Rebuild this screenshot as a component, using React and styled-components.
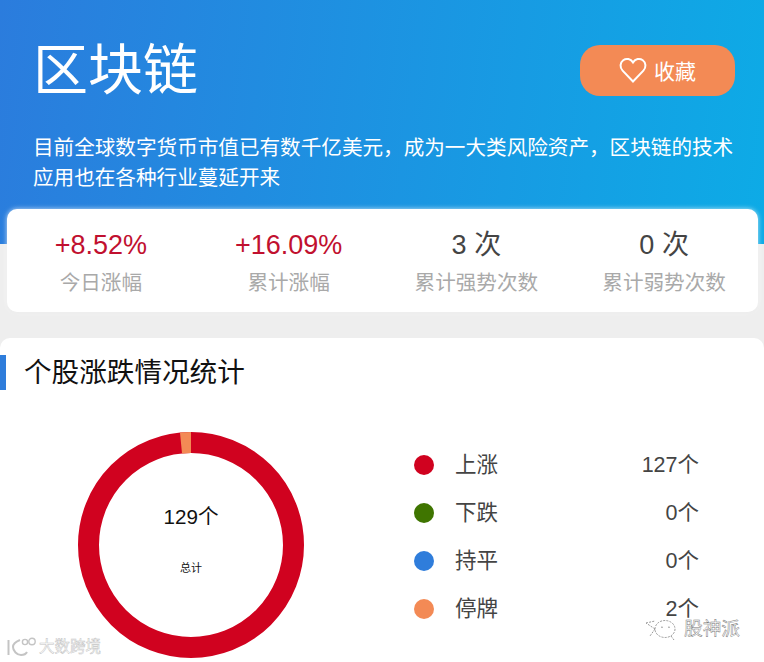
import React from "react";
import styled, { createGlobalStyle } from "styled-components";

const Global = createGlobalStyle`
  html, body { margin: 0; padding: 0; background: #eeeeee; overflow: hidden; }
  body { font-family: "Liberation Sans", "Noto Sans CJK SC", sans-serif; }
  * { box-sizing: border-box; }
`;
const Page = styled.div`
  width: 764px; height: 662px; position: relative; overflow: hidden; background: #eeeeee;
`;
const Hero = styled.header`
  height: 244px;
  padding: 35px 29px 0 33px;
  color: #fff;
  background: linear-gradient(97deg, #2b7cdd 0%, #0dabe6 100%);
`;
const HeroTop = styled.div`
  display: flex; justify-content: space-between; align-items: center;
  height: 70px;
`;
const Title = styled.h1`
  margin: 0; font-size: 55px; line-height: 70px; font-weight: 400;
`;
const FavButton = styled.button`
  width: 155px; height: 51px; border: 0; border-radius: 20px;
  background: #f38a55; color: #fff; font: inherit; font-size: 21px;
  display: flex; align-items: center; justify-content: center; gap: 7px;
`;
const Desc = styled.p`
  margin: 28px 0 0; font-size: 20.6px; line-height: 30px; width: 704px;
`;
const StatsCard = styled.section`
  width: 751px; height: 103px; margin: -35px 0 0 7px; position: relative;
  display: grid; grid-template-columns: repeat(4, 1fr);
  padding-top: 17px;
  background: #fff; border-radius: 10px;
  box-shadow: 0 0 5px rgba(255,255,255,.75), 0 1px 3px rgba(0,0,0,.05);
`;
const Stat = styled.div`
  display: flex; flex-direction: column; align-items: center;
`;
const StatValue = styled.div`
  font-size: 27px; line-height: 38px;
  color: ${p => (p.$up ? "#c1102f" : "#444444")};
`;
const StatLabel = styled.div`
  font-size: 20.6px; line-height: 38px; color: #a9a9a9;
`;
const Panel = styled.section`
  margin-top: 26px; height: 330px; background: #fff; border-radius: 10px 10px 0 0;
  padding-top: 17px;
`;
const SectionTitle = styled.h2`
  margin: 0; height: 35px; padding-left: 18px; border-left: 6px solid #2f7ddb;
  font-size: 27.6px; line-height: 35px; font-weight: 400; color: #111;
`;
const ChartRow = styled.div`
  display: flex; align-items: flex-start; padding: 42px 0 0 78px;
`;
const Donut = styled.div`
  position: relative; width: 226px; height: 226px; flex: none;
`;
const DonutCenter = styled.div`
  position: absolute; left: 0; right: 0; top: 69px;
  display: flex; flex-direction: column; align-items: center; color: #111;
`;
const DonutValue = styled.div`
  font-size: 20.6px; line-height: 32px;
`;
const DonutLabel = styled.div`
  font-size: 11px; line-height: 16px; margin-top: 27px;
`;
const Legend = styled.ul`
  list-style: none; margin: 9px 0 0 110px; padding: 0; width: 285px;
`;
const LegendRow = styled.li`
  height: 48px; display: flex; align-items: center; color: #444;
  font-size: 21.5px;
`;
const Dot = styled.span`
  width: 20px; height: 20px; border-radius: 50%; background: ${p => p.$color};
  margin-right: 21px; flex: none;
`;
const LegendName = styled.span`
  padding-bottom: 6px;
`;
const LegendCount = styled.span`
  margin-left: auto; padding-bottom: 6px;
`;
const MarkLeft = styled.div`
  position: absolute; left: 6px; bottom: 4px; display: flex; align-items: center; gap: 3px;
  color: #fff; font-size: 15.5px; line-height: 22px;
  -webkit-text-stroke: 0.5px #c4c4c4;
`;
const MarkRight = styled.div`
  position: absolute; left: 645px; top: 616px; display: flex; align-items: center; gap: 7px;
  color: #fff; font-size: 18.7px; line-height: 24px;
  -webkit-text-stroke: 0.45px #777;
`;

const rows = [
  ["上涨", "127个", "#d0021f"],
  ["下跌", "0个", "#3f7500"],
  ["持平", "0个", "#2f7ddb"],
  ["停牌", "2个", "#f38a55"],
];

const Heart = () => (
  <svg width="28" height="26" viewBox="0 0 28 26" fill="none" stroke="#fff" strokeWidth="2">
    <path d="M14 24.5 L3.6 13.6 C0.6 10.4 1 5.6 4.2 3.2 C7.4 .9 11.6 1.8 14 5.4 C16.4 1.8 20.6 .9 23.8 3.2 C27 5.6 27.4 10.4 24.4 13.6 Z" />
  </svg>
);

const polar = (a, r) => {
  const t = (a * Math.PI) / 180;
  return [113 + r * Math.sin(t), 113 - r * Math.cos(t)];
};

const Ring = () => {
  const [ax, ay] = polar(-5.6, 102.5);
  return (
    <svg width="226" height="226" viewBox="0 0 226 226">
      <circle cx="113" cy="113" r="102.5" fill="none" stroke="#d0021f" strokeWidth="21" />
      <path d={`M${ax} ${ay} A102.5 102.5 0 0 1 113 10.5`} fill="none" stroke="#f38a55" strokeWidth="21" />
    </svg>
  );
};

const KLogo = () => (
  <svg width="30" height="20" viewBox="0 0 30 20" fill="none" stroke="#c4c4c4" strokeWidth="2">
    <path d="M2.5 3 V18" />
    <path d="M14 3 C9 5 7 8 7 10 C7 14 11 18 15 18 C18 18 20 17 21 15" />
    <circle cx="19" cy="5" r="2.6" strokeWidth="1.4" />
    <circle cx="26" cy="4.5" r="3.2" strokeWidth="1.4" />
  </svg>
);

const FishLogo = () => (
  <svg width="32" height="26" viewBox="0 0 32 26" fill="none" stroke="#9a9a9a" strokeWidth="1" strokeDasharray="2 1.2">
    <ellipse cx="20" cy="13" rx="10" ry="8.5" />
    <path d="M10 13 L1 7 M10 13 L5 20" />
    <path d="M1 7 L10 5" />
    <circle cx="17" cy="11" r=".6" />
    <circle cx="24" cy="11" r=".6" />
    <path d="M26 20 L29 24" />
  </svg>
);

export default function App() {
  return (
    <Page>
      <Global />
      <Hero>
        <HeroTop>
          <Title>区块链</Title>
          <FavButton><Heart />收藏</FavButton>
        </HeroTop>
        <Desc>目前全球数字货币市值已有数千亿美元，成为一大类风险资产，区块链的技术应用也在各种行业蔓延开来</Desc>
      </Hero>
      <StatsCard>
        <Stat><StatValue $up>+8.52%</StatValue><StatLabel>今日涨幅</StatLabel></Stat>
        <Stat><StatValue $up>+16.09%</StatValue><StatLabel>累计涨幅</StatLabel></Stat>
        <Stat><StatValue>3 次</StatValue><StatLabel>累计强势次数</StatLabel></Stat>
        <Stat><StatValue>0 次</StatValue><StatLabel>累计弱势次数</StatLabel></Stat>
      </StatsCard>
      <Panel>
        <SectionTitle>个股涨跌情况统计</SectionTitle>
        <ChartRow>
          <Donut>
            <Ring />
            <DonutCenter>
              <DonutValue>129个</DonutValue>
              <DonutLabel>总计</DonutLabel>
            </DonutCenter>
          </Donut>
          <Legend>
            {rows.map(([name, count, color]) => (
              <LegendRow key={name}>
                <Dot $color={color} />
                <LegendName>{name}</LegendName>
                <LegendCount>{count}</LegendCount>
              </LegendRow>
            ))}
          </Legend>
        </ChartRow>
      </Panel>
      <MarkLeft><KLogo />大数跨境</MarkLeft>
      <MarkRight><FishLogo />股神派</MarkRight>
    </Page>
  );
}
